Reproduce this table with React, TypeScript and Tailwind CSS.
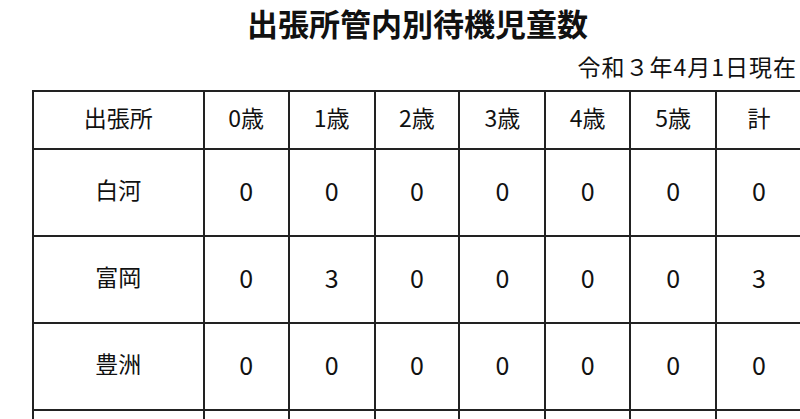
const cols = ['出張所', '0歳', '1歳', '2歳', '3歳', '4歳', '5歳', '計'];
const widths = ['w-[171px]', 'w-[85px]', 'w-[86px]', 'w-[85px]', 'w-[86px]', 'w-[85px]', 'w-[86px]', 'w-[86px]'];

const rows: [string, number[]][] = [
  ['白河', [0, 0, 0, 0, 0, 0, 0]],
  ['富岡', [0, 3, 0, 0, 0, 0, 3]],
  ['豊洲', [0, 0, 0, 0, 0, 0, 0]],
  ['', []],
];

export default function App() {
  return (
    <div
      className="w-[800px] h-[419px] overflow-hidden bg-white text-[#111]"
      style={{ fontFamily: '"Noto Sans CJK JP", "Noto Sans", sans-serif' }}
    >
      <div className="ml-[32px] w-[771px]">
        {/* Title */}
        <h1 className="h-[50px] pb-[5px] flex items-center justify-center text-[31px] font-bold leading-none">
          出張所管内別待機児童数
        </h1>
        <div className="h-[40px] pb-[8px] flex items-center justify-end pr-[6px] text-[23px] leading-none tracking-[1px]">
          令和３年4月1日現在
        </div>

        {/* Table */}
        <table className="table-fixed border-collapse text-[23px] leading-none">
          <thead>
            <tr className="h-[58px]">
              {cols.map((c, i) => (
                <th key={c} className={`${widths[i]} border-2 border-[#222] pb-[6px] font-normal text-center`}>
                  {c}
                </th>
              ))}
            </tr>
          </thead>
          <tbody>
            {rows.map(([name, vals], r) => (
              <tr key={r} className="h-[87px]">
                <td className="border-2 border-[#222] pb-[6px] text-center">{name}</td>
                {cols.slice(1).map((_, i) => (
                  <td key={i} className="border-2 border-[#222] pb-[5px] text-center text-[25px]">
                    {vals[i] ?? ''}
                  </td>
                ))}
              </tr>
            ))}
          </tbody>
        </table>
      </div>
    </div>
  );
}
